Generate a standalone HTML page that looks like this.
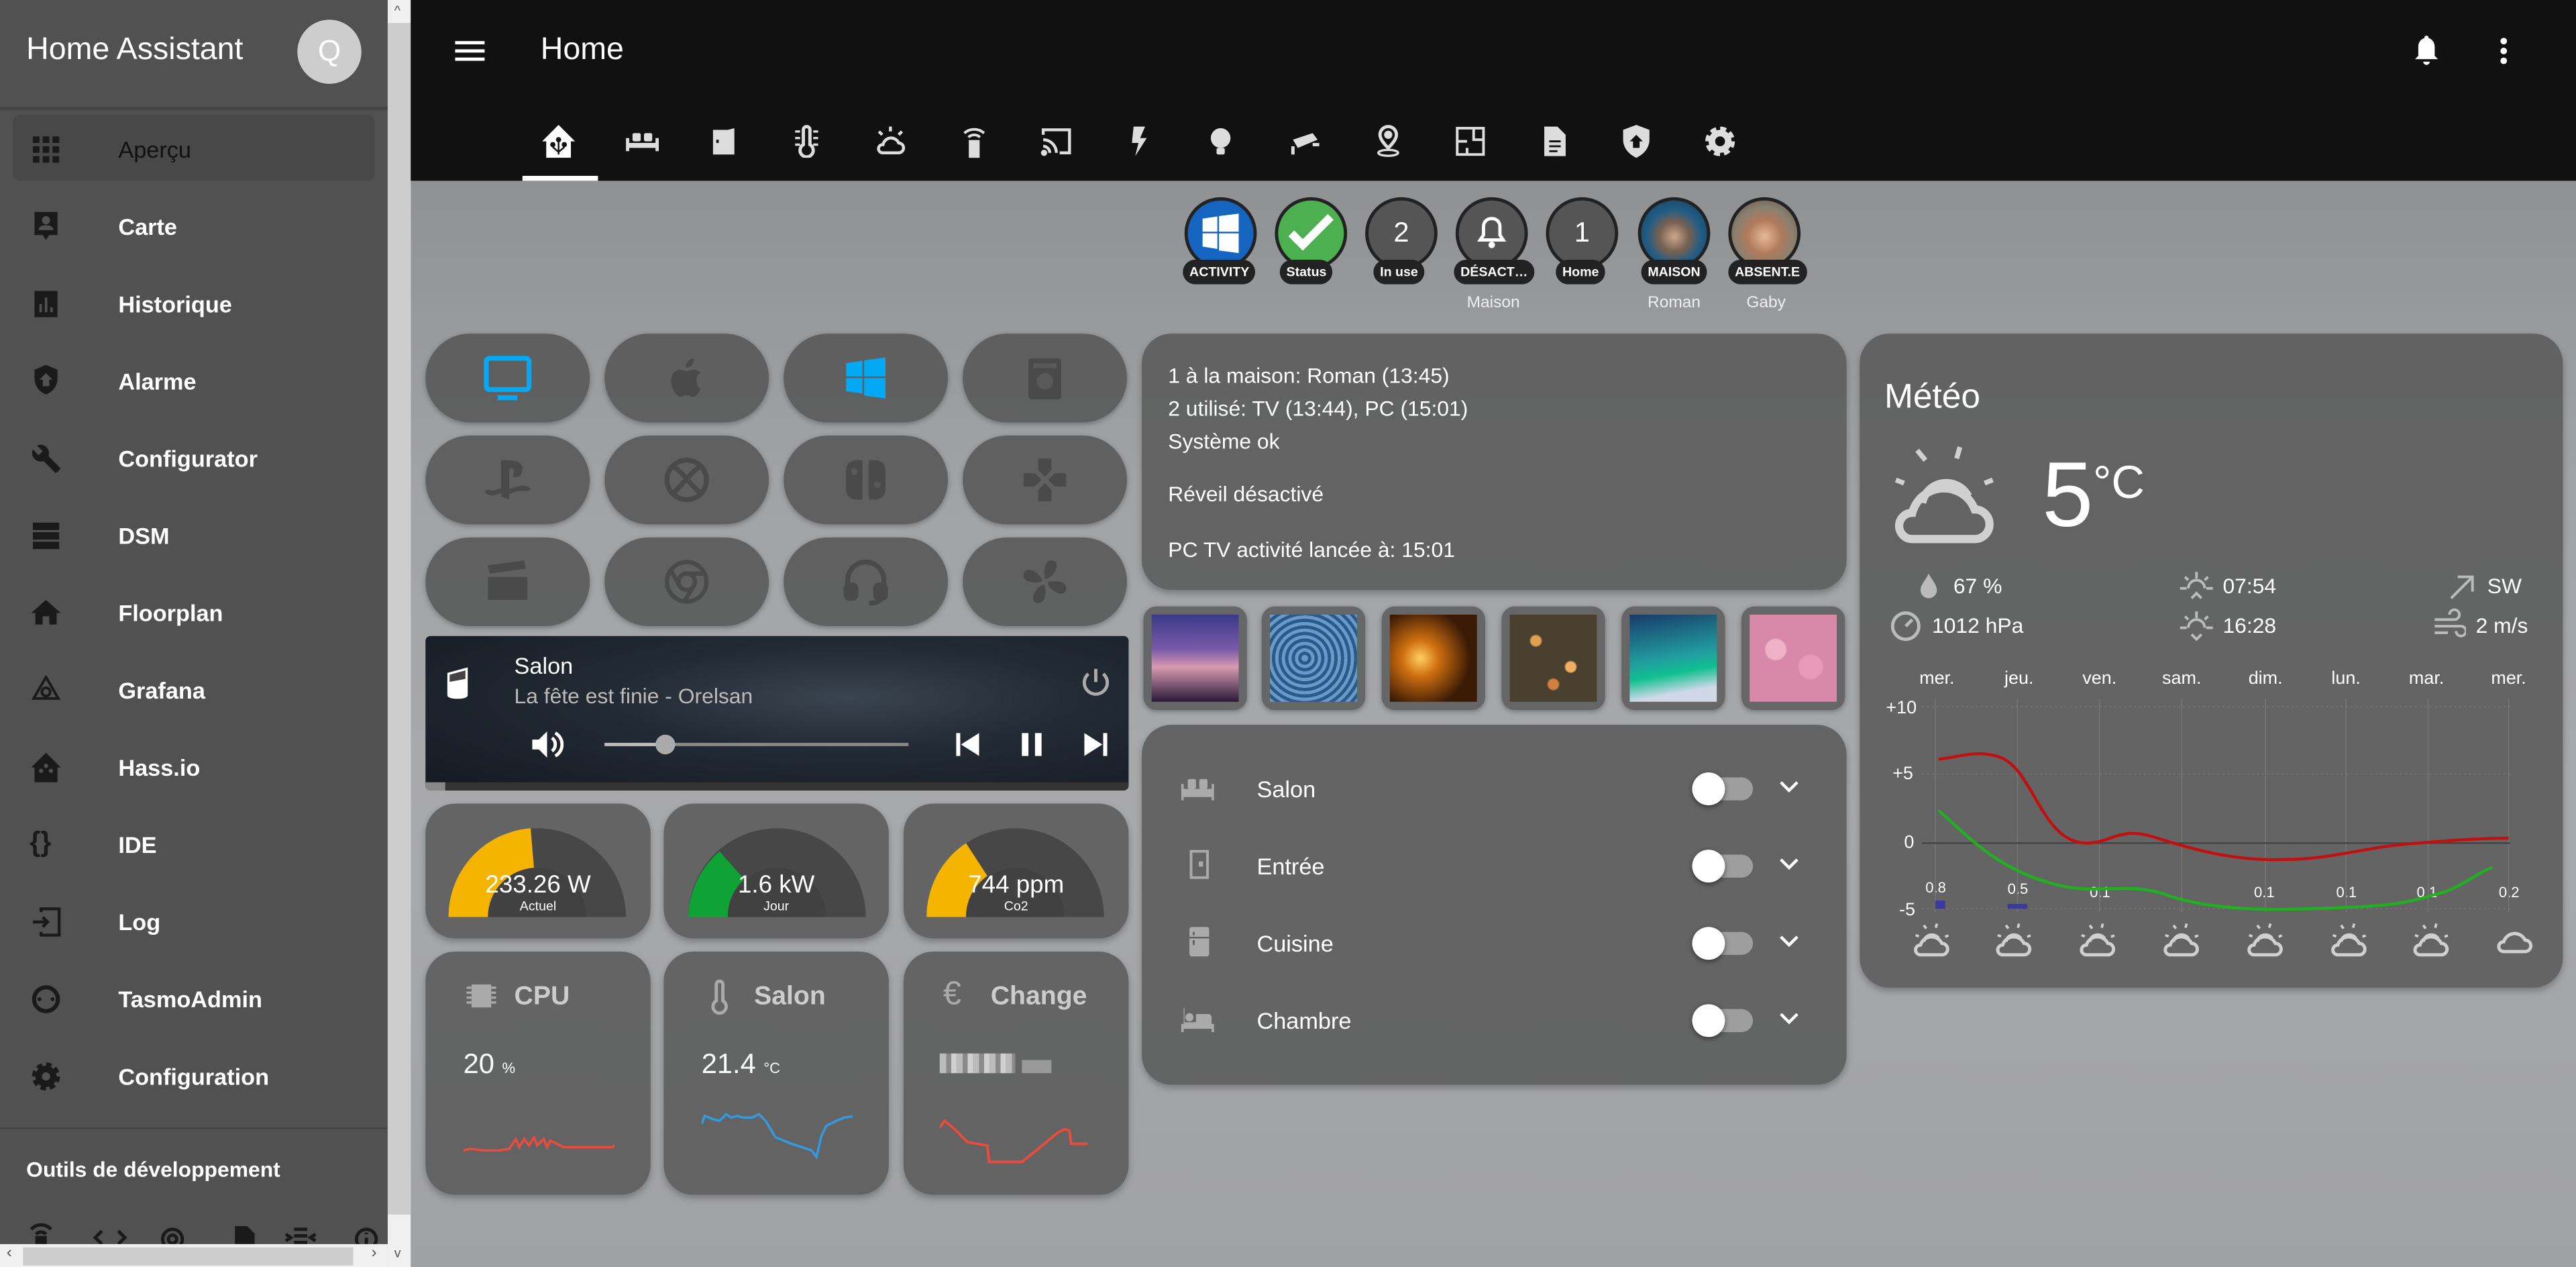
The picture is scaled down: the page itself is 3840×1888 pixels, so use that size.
<!DOCTYPE html>
<html><head><meta charset="utf-8">
<style>
html,body{margin:0;padding:0;width:3840px;height:1888px;overflow:hidden;background:#9c9d9f}
#w{position:absolute;left:0;top:0;width:1568px;height:771px;transform:scale(2.44898);transform-origin:0 0;font-family:"Liberation Sans",sans-serif;color:#fff;overflow:hidden;background:linear-gradient(180deg,#909193 110px,#a2a3a5 300px,#a8a9ab 500px,#a0a1a3 771px)}
.a{position:absolute}
#side{left:0;top:0;width:236px;height:771px;background:#515151}
.it{position:absolute;left:72px;font-size:14px;font-weight:bold;color:#fff}
.ic{position:absolute;left:19px;width:18px;height:18px}
.card{position:absolute;background:rgba(88,88,88,.85);border-radius:18px;box-shadow:0 2px 4px rgba(0,0,0,.25)}
.btn{position:absolute;width:100px;height:54px;border-radius:27px;background:rgba(85,85,85,.85);box-shadow:0 1px 3px rgba(0,0,0,.3)}
.btn svg{position:absolute;left:34px;top:11px}
.bd{position:absolute;top:120px;width:44px;height:44px;border-radius:50%;border:2px solid #222;background:#555;box-sizing:border-box;font-size:17px;text-align:center;line-height:40px}
.bl{position:absolute;top:158px;height:15px;border-radius:8px;background:#222;font-size:8px;line-height:15px;text-align:center;font-weight:bold;padding:0 4px}
.bn{position:absolute;top:179px;font-size:10px;color:#eee;text-align:center;width:60px}
.tab{position:absolute;top:76px;width:20px;height:20px}
.row{position:absolute;left:0;width:429px;height:40px;font-size:14px}
.tg{position:absolute;left:338px;top:13px;width:34px;height:14px;border-radius:7px;background:#9e9e9e}
.tg:before{content:"";position:absolute;left:-3px;top:-3px;width:20px;height:20px;border-radius:50%;background:#fff;box-shadow:0 1px 3px rgba(0,0,0,.5)}
.chev{position:absolute;left:388px;top:15px}
.img{position:absolute;top:369px;width:63px;height:63px;border-radius:8px;background:#666;box-shadow:0 1px 3px rgba(0,0,0,.3)}
.img div{position:absolute;left:5px;top:5px;width:53px;height:53px}
.wd{position:absolute;top:407px;font-size:11px;color:#fff;text-align:center;width:40px}
.wi{position:absolute;top:561px}
</style></head><body><div id="w">

<svg width="0" height="0" style="position:absolute"><defs>
<symbol id="pc" viewBox="0 0 24 22"><g fill="none" stroke="#d0d0d0" stroke-width="2"><path d="M5 20h13a3.5 3.5 0 000-7 7 7 0 00-13 1 3 3 0 000 6z"/><path d="M7 12a5 5 0 019-2"/><path d="M7 2l1.5 2M15 1l-.7 2.5M2 8l2 .8M20 9l2-.8" stroke-width="1.5"/></g></symbol>
</defs></svg>

<!-- sidebar -->
<div id="side" class="a">
 <div class="a" style="left:16px;top:20px;font-size:19px">Home Assistant</div>
 <div class="a" style="left:181px;top:12px;width:39px;height:39px;border-radius:50%;background:#cdcdcd;color:#fff;font-size:18px;text-align:center;line-height:39px">Q</div>
 <div class="a" style="left:0;top:65px;width:236px;height:2px;background:#444"></div>
 <div class="a" style="left:8px;top:70px;width:220px;height:40px;border-radius:4px;background:#484848"></div>
 <div class="it" style="top:83px;color:#111;font-weight:normal">Aperçu</div>
 <svg class="ic" style="top:82px" viewBox="0 0 18 18" fill="#1a1a1a"><rect x="1" y="1" width="4" height="4"/><rect x="7" y="1" width="4" height="4"/><rect x="13" y="1" width="4" height="4"/><rect x="1" y="7" width="4" height="4"/><rect x="7" y="7" width="4" height="4"/><rect x="13" y="7" width="4" height="4"/><rect x="1" y="13" width="4" height="4"/><rect x="7" y="13" width="4" height="4"/><rect x="13" y="13" width="4" height="4"/></svg>
 <div class="it" style="top:130px">Carte</div>
 <svg class="ic" style="top:128px" viewBox="0 0 18 18" fill="#1a1a1a"><path d="M2 1h14v14h-5l-2 3-2-3H2z"/><circle cx="9" cy="6" r="2.5" fill="#515151"/><path d="M4.5 12c0-2 2-3 4.5-3s4.5 1 4.5 3z" fill="#515151"/></svg>
 <div class="it" style="top:177px">Historique</div>
 <svg class="ic" style="top:176px" viewBox="0 0 18 18" fill="#1a1a1a"><path d="M2 1h14v16H2z"/><rect x="5" y="9" width="1.5" height="5" fill="#515151"/><rect x="8.3" y="5" width="1.5" height="9" fill="#515151"/><rect x="11.6" y="11" width="1.5" height="3" fill="#515151"/></svg>
 <div class="it" style="top:224px">Alarme</div>
 <svg class="ic" style="top:222px" viewBox="0 0 18 18" fill="#1a1a1a"><path d="M9 0L2 3v5c0 5 3 8.5 7 10 4-1.5 7-5 7-10V3z"/><path d="M9 5l-4 4h2v4h4V9h2z" fill="#515151"/></svg>
 <div class="it" style="top:271px">Configurator</div>
 <svg class="ic" style="top:270px" viewBox="0 0 18 18" fill="#1a1a1a"><path d="M16.5 14.5l-7-7c.7-1.8.3-3.9-1.2-5.4C6.7.5 4.4.2 2.5 1.1L6 4.5 3.5 7 0 3.5C-.9 5.4-.5 7.7 1.1 9.3c1.5 1.5 3.6 1.9 5.4 1.2l7 7c.3.3.8.3 1.1 0l1.9-1.9c.3-.3.3-.8 0-1.1z" transform="translate(1 0)"/></svg>
 <div class="it" style="top:318px">DSM</div>
 <svg class="ic" style="top:317px" viewBox="0 0 18 18" fill="#1a1a1a"><rect x="1" y="1" width="16" height="4.5"/><rect x="1" y="6.8" width="16" height="4.5"/><rect x="1" y="12.6" width="16" height="4.5"/></svg>
 <div class="it" style="top:365px">Floorplan</div>
 <svg class="ic" style="top:364px" viewBox="0 0 18 18" fill="#1a1a1a"><path d="M7 16v-5h4v5h4.5V9H18L9 1 0 9h2.5v7z"/></svg>
 <div class="it" style="top:412px">Grafana</div>
 <svg class="ic" style="top:411px" viewBox="0 0 18 18" fill="none" stroke="#1a1a1a" stroke-width="1.6"><path d="M9 1l7.5 13h-15z"/><circle cx="9" cy="10" r="2.5"/></svg>
 <div class="it" style="top:459px">Hass.io</div>
 <svg class="ic" style="top:458px" viewBox="0 0 18 18" fill="#1a1a1a"><path d="M9 0L0 9h2v9h14V9h2z"/><circle cx="9" cy="8" r="1.3" fill="#515151"/><circle cx="6" cy="11" r="1.3" fill="#515151"/><circle cx="12" cy="11" r="1.3" fill="#515151"/></svg>
 <div class="it" style="top:506px">IDE</div>
 <div class="a" style="left:18px;top:503px;font-size:17px;color:#1a1a1a;font-weight:bold">{}</div>
 <div class="it" style="top:553px">Log</div>
 <svg class="ic" style="top:552px" viewBox="0 0 18 18" fill="none" stroke="#1a1a1a" stroke-width="1.8"><path d="M6 3V1h11v16H6v-2"/><path d="M1 9h9M7 6l3 3-3 3"/></svg>
 <div class="it" style="top:600px">TasmoAdmin</div>
 <svg class="ic" style="top:599px" viewBox="0 0 18 18"><circle cx="9" cy="9" r="8.5" fill="#1a1a1a"/><circle cx="9" cy="9" r="6" fill="#515151"/><circle cx="5" cy="9" r="1.2" fill="#1a1a1a"/><circle cx="13" cy="9" r="1.2" fill="#1a1a1a"/></svg>
 <div class="it" style="top:647px">Configuration</div>
 <svg class="ic" style="top:646px" viewBox="0 0 18 18"><circle cx="9" cy="9" r="6.5" fill="#1a1a1a" stroke="#1a1a1a" stroke-width="4" stroke-dasharray="3 2.1"/><circle cx="9" cy="9" r="2.5" fill="#515151"/></svg>
 <div class="a" style="left:0;top:686px;width:236px;height:1px;background:#444"></div>
 <div class="a" style="left:16px;top:704px;font-size:13px;font-weight:bold">Outils de développement</div>
 <svg class="a" style="left:16px;top:742px" width="220" height="16" fill="none" stroke="#1a1a1a" stroke-width="2">
  <path d="M3 6a8 8 0 0112 0M6 9a4 4 0 016 0"/><rect x="6.5" y="11" width="5" height="6" fill="#1a1a1a"/>
  <path d="M46 7l-4 4 4 4M56 7l4 4-4 4"/>
  <circle cx="89" cy="12" r="6"/><circle cx="89" cy="12" r="2.5"/>
  <path d="M128 5h6l4 4v8h-10z" fill="#1a1a1a"/>
  <path d="M163 6h8M163 10h8M163 14h8M158 9l3 2-3 2M176 9l-3 2 3 2"/>
  <circle cx="207" cy="12" r="6"/><path d="M207 11v4M207 8v1"/>
 </svg>
 <div class="a" style="left:0;top:757px;width:236px;height:14px;background:#f0f0f0"></div>
 <div class="a" style="left:14px;top:759px;width:201px;height:11px;background:#cdcdcd"></div>
 <div class="a" style="left:4px;top:757px;font-size:10px;color:#555">‹</div>
 <div class="a" style="left:226px;top:757px;font-size:10px;color:#555">›</div>
</div>
<div class="a" style="left:236px;top:0;width:14px;height:771px;background:#f0f0f0"></div>
<div class="a" style="left:236px;top:14px;width:14px;height:725px;background:#cdcdcd"></div>
<div class="a" style="left:240px;top:2px;font-size:8px;color:#555">^</div>
<div class="a" style="left:240px;top:758px;font-size:8px;color:#555">v</div>

<!-- header -->
<div class="a" style="left:250px;top:0;width:1318px;height:110px;background:#111"></div>
<svg class="a" style="left:277px;top:24px" width="18" height="14"><rect y="1" width="18" height="2" fill="#fff"/><rect y="6" width="18" height="2" fill="#fff"/><rect y="11" width="18" height="2" fill="#fff"/></svg>
<div class="a" style="left:329px;top:20px;font-size:19px">Home</div>
<svg class="a" style="left:1467px;top:21px" width="20" height="22" viewBox="0 0 20 22" fill="#fff"><path d="M10 2c-3 0-5 2.5-5 5.5V13l-2 2h14l-2-2V7.5C15 4.5 13 2 10 2z"/><circle cx="10" cy="2" r="1.3"/><path d="M8 16.5a2 2 0 004 0z"/></svg>
<svg class="a" style="left:1520px;top:22px" width="8" height="18" fill="#fff"><circle cx="4" cy="3" r="2"/><circle cx="4" cy="9" r="2"/><circle cx="4" cy="15" r="2"/></svg>
<!-- tabs -->
<svg class="tab" style="left:330px" viewBox="0 0 20 20" fill="#fff"><path d="M10 0L0 10h2.5v10h15V10H20z"/><circle cx="10" cy="9" r="1.6" fill="#111"/><circle cx="6.5" cy="12" r="1.6" fill="#111"/><circle cx="13.5" cy="12" r="1.6" fill="#111"/><path d="M10 10v8M6.5 13.5l3.5 3M13.5 13.5L10 16.5" stroke="#111" stroke-width="1"/></svg>
<div class="a" style="left:318px;top:107px;width:46px;height:3px;background:#fff"></div>
<svg class="tab" style="left:381px" viewBox="0 0 20 20" fill="#ddd"><path d="M0 8h2v3h16V8h2v8h-2v-2H2v2H0z"/><rect x="4" y="5" width="5" height="5" rx="1"/><rect x="11" y="5" width="5" height="5" rx="1"/></svg>
<svg class="tab" style="left:431px" viewBox="0 0 20 20" fill="#ddd"><path d="M3 3h9l4-1v16H3z"/><rect x="5" y="9" width="1.5" height="2" fill="#111"/></svg>
<svg class="tab" style="left:481px" viewBox="0 0 20 20" fill="none" stroke="#ddd" stroke-width="2"><path d="M8 12V3a2 2 0 014 0v9a4 4 0 11-4 0z"/><path d="M3 4h3M3 8h3M3 12h3M14 4h3M14 8h3M14 12h3" stroke-width="1.4"/></svg>
<svg class="tab" style="left:532px" viewBox="0 0 20 20" fill="none" stroke="#ddd" stroke-width="1.8"><path d="M5 17h10a3 3 0 000-6 5 5 0 00-9.5 1A2.5 2.5 0 005 17z"/><path d="M10 1v3M3 4l2 2M17 4l-2 2" /></svg>
<svg class="tab" style="left:583px" viewBox="0 0 20 20" fill="none" stroke="#ddd" stroke-width="1.6"><path d="M4 5a9 9 0 0112 0M6.5 7.5a5 5 0 017 0"/><rect x="7.5" y="10" width="5" height="10" fill="#ddd"/></svg>
<svg class="tab" style="left:633px" viewBox="0 0 20 20" fill="none" stroke="#ddd" stroke-width="1.8"><path d="M2 6V3h16v14h-6"/><path d="M2 9a8 8 0 018 8M2 13a4 4 0 014 4"/><circle cx="2.5" cy="17" r="1" fill="#ddd"/></svg>
<svg class="tab" style="left:683px" viewBox="0 0 20 20" fill="#ddd"><path d="M7 1h7l-3 7h4L8 19l2-8H6z"/></svg>
<svg class="tab" style="left:733px" viewBox="0 0 20 20" fill="#ddd"><circle cx="10" cy="8" r="6"/><rect x="7.5" y="14" width="5" height="4" rx="1"/></svg>
<svg class="tab" style="left:785px" viewBox="0 0 20 20" fill="#ddd"><path d="M2 9l12-4 3 4-12 5z"/><path d="M3 13v5H1v-5z"/><rect x="14" y="11" width="4" height="2"/></svg>
<svg class="tab" style="left:835px" viewBox="0 0 20 20" fill="none" stroke="#ddd" stroke-width="2"><path d="M10 14s5-4.5 5-8a5 5 0 00-10 0c0 3.5 5 8 5 8z"/><circle cx="10" cy="6" r="1.5" fill="#ddd"/><ellipse cx="10" cy="17" rx="6" ry="1.8" stroke-width="1.4"/></svg>
<svg class="tab" style="left:885px" viewBox="0 0 20 20" fill="none" stroke="#ddd" stroke-width="1.6"><rect x="2" y="2" width="16" height="16"/><path d="M2 10h6M12 2v7h6M8 14v4"/></svg>
<svg class="tab" style="left:936px" viewBox="0 0 20 20" fill="#ddd"><path d="M4 1h8l5 5v13H4z"/><path d="M7 10h7M7 13h7M7 16h5" stroke="#111" stroke-width="1.2"/></svg>
<svg class="tab" style="left:986px" viewBox="0 0 20 20" fill="#ddd"><path d="M10 0L2 3v6c0 5 3.5 9 8 11 4.5-2 8-6 8-11V3z"/><path d="M10 6l-4 4h2v4h4v-4h2z" fill="#111"/></svg>
<svg class="tab" style="left:1037px" viewBox="0 0 20 20"><circle cx="10" cy="10" r="7" fill="#ddd" stroke="#ddd" stroke-width="4" stroke-dasharray="3.3 2.2"/><circle cx="10" cy="10" r="3" fill="#111"/></svg>

<!-- badges -->
<div class="bd" style="left:721px;background:#1565c0"><svg width="26" height="26" viewBox="0 0 26 26" style="margin-top:7px"><path d="M2 4l9-1.3V12H2zM12 2.5L24 1v11H12zM2 13h9v9.5L2 21zM12 13h12v12l-12-1.6z" fill="#fff"/></svg></div>
<div class="bl" style="left:720px">ACTIVITY</div>
<div class="bd" style="left:776px;background:#4caf50"><svg width="30" height="26" viewBox="0 0 30 26" style="margin-top:7px"><path d="M3 13l7 7L27 3" stroke="#fff" stroke-width="5" fill="none"/></svg></div>
<div class="bl" style="left:779px">Status</div>
<div class="bd" style="left:831px">2</div>
<div class="bl" style="left:836px">In use</div>
<div class="bd" style="left:886px"><svg width="18" height="22" viewBox="0 0 18 22" style="margin-top:8px" fill="none" stroke="#fff" stroke-width="2"><path d="M9 3c-3 0-5 2-5 5v5l-2 3h14l-2-3V8c0-3-2-5-5-5z"/><circle cx="9" cy="19" r="1" fill="#fff"/></svg></div>
<div class="bl" style="left:885px">DÉSACT…</div>
<div class="bn" style="left:879px">Maison</div>
<div class="bd" style="left:941px">1</div>
<div class="bl" style="left:947px">Home</div>
<div class="bd" style="left:997px;background:radial-gradient(circle at 50% 55%,#c9a98f 0,#7a6150 30%,#235d84 55%,#0e3b5a 100%)"></div>
<div class="bl" style="left:999px">MAISON</div>
<div class="bn" style="left:989px">Roman</div>
<div class="bd" style="left:1052px;background:radial-gradient(circle at 50% 55%,#e6b99a 0,#b07a5b 35%,#8a8070 60%,#5a4a40 100%)"></div>
<div class="bl" style="left:1052px">ABSENT.E</div>
<div class="bn" style="left:1045px">Gaby</div>

<!-- buttons -->
<div class="btn" style="left:259px;top:203px"><svg width="32" height="32" viewBox="0 0 32 32" fill="none" stroke="#03a9f4" stroke-width="3"><rect x="3" y="4" width="26" height="19" rx="2"/><path d="M10 28h12" /></svg></div>
<div class="btn" style="left:368px;top:203px"><svg width="32" height="32" viewBox="0 0 32 32" fill="#4a4a4a"><path d="M22 17c0-3 2.5-4 2.5-4-1.5-2-3.5-2-4.5-2-1.8 0-3 1-4 1s-2.5-1-4-1c-3 0-5.5 2.5-5.5 6.5 0 5 3.5 10 5.5 10 1.3 0 2-1 4-1s2.5 1 4 1c2 0 4-3.5 4.5-5-2-1-2.5-3-2.5-5.5zM19 8c1-1 1.5-2.5 1.3-4-1.3 0-2.8 1-3.6 2-.8 1-1.4 2.4-1.2 3.7 1.4.1 2.7-.7 3.5-1.7z"/></svg></div>
<div class="btn" style="left:477px;top:203px"><svg width="32" height="32" viewBox="0 0 32 32" fill="#03a9f4"><path d="M4 7l10-1.5V15H4zM15 5.3L28 3.5V15H15zM4 16h10v9.5L4 24zM15 16h13v12.5l-13-1.8z"/></svg></div>
<div class="btn" style="left:586px;top:203px"><svg width="32" height="32" viewBox="0 0 32 32" fill="#4a4a4a"><rect x="6" y="4" width="20" height="25" rx="2"/><circle cx="16" cy="18" r="5" fill="#595959"/><rect x="9" y="7" width="14" height="3" fill="#595959"/></svg></div>
<div class="btn" style="left:259px;top:265px"><svg width="32" height="32" viewBox="0 0 32 32" fill="#4a4a4a"><path d="M12 4v22l5 2V10c0-1 1-1.5 2-1s1 2.5 0 5c4 1 6-1 6-5s-4-5-13-5zM3 22c-2 1.5 0 3 4 3.5l5-1.5v-3l-5 1.5zM30 22c0-2-4-3-8-2l-5 1.5v3l5-1.7c3 0 6 .2 8-.8z"/></svg></div>
<div class="btn" style="left:368px;top:265px"><svg width="32" height="32" viewBox="0 0 32 32" fill="none" stroke="#4a4a4a" stroke-width="3"><circle cx="16" cy="16" r="12"/><path d="M8 8c5 3 8 8 16 16M24 8C19 11 16 16 8 24"/></svg></div>
<div class="btn" style="left:477px;top:265px"><svg width="32" height="32" viewBox="0 0 32 32" fill="#4a4a4a"><path d="M14 4h-4a6 6 0 00-6 6v12a6 6 0 006 6h4z"/><path d="M18 4h4a6 6 0 016 6v12a6 6 0 01-6 6h-4z"/><rect x="17" y="6" width="1" height="20" fill="#595959"/><circle cx="9" cy="11" r="2" fill="#595959"/><circle cx="23" cy="19" r="2" fill="#595959"/></svg></div>
<div class="btn" style="left:586px;top:265px"><svg width="32" height="32" viewBox="0 0 32 32" fill="#4a4a4a"><path d="M12 3h8v7l-4 4-4-4zM12 29h8v-7l-4-4-4 4zM3 12v8h7l4-4-4-4zM29 12v8h-7l-4-4 4-4z"/></svg></div>
<div class="btn" style="left:259px;top:327px"><svg width="32" height="32" viewBox="0 0 32 32" fill="#4a4a4a"><path d="M4 13h24v14H4zM4 6l22-3 1 5-22 3z"/></svg></div>
<div class="btn" style="left:368px;top:327px"><svg width="32" height="32" viewBox="0 0 32 32" fill="none" stroke="#4a4a4a" stroke-width="2.6"><circle cx="16" cy="16" r="12"/><circle cx="16" cy="16" r="5"/><path d="M16 11h11M11.7 18.5L6 8.5M20.3 18.5L14.5 28"/></svg></div>
<div class="btn" style="left:477px;top:327px"><svg width="32" height="32" viewBox="0 0 32 32" fill="none" stroke="#4a4a4a" stroke-width="3"><path d="M5 20v-5a11 11 0 0122 0v5"/><rect x="4" y="18" width="6" height="8" rx="2" fill="#4a4a4a"/><rect x="22" y="18" width="6" height="8" rx="2" fill="#4a4a4a"/><path d="M25 26c0 2-3 3-7 3"/></svg></div>
<div class="btn" style="left:586px;top:327px"><svg width="32" height="32" viewBox="0 0 32 32" fill="#4a4a4a"><path d="M16 14c-1-6 0-11 4-11 5 0 4 7-2 11zM18 16c6-1 11 0 11 4 0 5-7 4-11-2zM16 18c1 6 0 11-4 11-5 0-4-7 2-11zM14 16c-6 1-11 0-11-4 0-5 7-4 11 2z"/></svg></div>

<!-- media player -->
<div class="a" style="left:259px;top:387px;width:428px;height:94px;border-radius:3px;overflow:hidden;background:radial-gradient(ellipse at 60% 40%,#3a4450 0,#222a33 40%,#141a22 100%)">
 <div class="a" style="left:0;top:89px;width:428px;height:5px;background:#333"></div>
 <div class="a" style="left:0;top:89px;width:12px;height:5px;background:#888"></div>
</div>
<svg class="a" style="left:272px;top:405px" width="14" height="22" viewBox="0 0 14 22"><path d="M1 5l11-3v16c0 2-11 2-11 0z" fill="#fff"/><path d="M1 5l11-3v6L1 10z" fill="#444"/><path d="M1 5l11-3v16c0 2-11 2-11 0z" fill="none" stroke="#fff" stroke-width="1.4"/></svg>
<div class="a" style="left:313px;top:397px;font-size:14px">Salon</div>
<div class="a" style="left:313px;top:416px;font-size:13px;color:#bbb">La fête est finie - Orelsan</div>
<svg class="a" style="left:657px;top:405px" width="20" height="20" viewBox="0 0 20 20" fill="none" stroke="#aaa" stroke-width="2"><path d="M10 2v8M5.5 5a7 7 0 109 0"/></svg>
<svg class="a" style="left:323px;top:444px" width="20" height="18" viewBox="0 0 20 18" fill="#fff"><path d="M1 6h4l5-5v16l-5-5H1z"/><path d="M13 5a5 5 0 010 8M15 2a8 8 0 010 14" stroke="#fff" stroke-width="2" fill="none"/></svg>
<div class="a" style="left:368px;top:452px;width:185px;height:2px;background:#888"></div>
<div class="a" style="left:368px;top:452px;width:37px;height:2px;background:#bbb"></div>
<div class="a" style="left:399px;top:447px;width:12px;height:12px;border-radius:50%;background:#aaa"></div>
<svg class="a" style="left:582px;top:446px" width="14" height="14" fill="#fff"><rect x="0" y="0" width="2.5" height="14"/><path d="M14 0v14L3 7z"/></svg>
<svg class="a" style="left:621px;top:446px" width="14" height="14" fill="#fff"><rect x="1" y="0" width="4" height="14"/><rect x="9" y="0" width="4" height="14"/></svg>
<svg class="a" style="left:660px;top:446px" width="14" height="14" fill="#fff"><path d="M0 0v14l11-7z"/><rect x="11.5" y="0" width="2.5" height="14"/></svg>

<!-- gauges -->
<div class="card" style="left:259px;top:489px;width:137px;height:82px"></div>
<div class="card" style="left:404px;top:489px;width:137px;height:82px"></div>
<div class="card" style="left:550px;top:489px;width:137px;height:82px"></div>
<svg class="a" style="left:259px;top:489px" width="428" height="82">
 <g transform="translate(68,69)"><path d="M-54 0A54 54 0 0154 0H30A30 30 0 00-30 0z" fill="#474747"/><path d="M-54 0A54 54 0 01-4 -54L-2 -30A30 30 0 00-30 0z" fill="#f5b400"/></g>
 <g transform="translate(214,69)"><path d="M-54 0A54 54 0 0154 0H30A30 30 0 00-30 0z" fill="#474747"/><path d="M-54 0A54 54 0 01-35 -40L-20 -23A30 30 0 00-30 0z" fill="#0fa235"/></g>
 <g transform="translate(359,69)"><path d="M-54 0A54 54 0 0154 0H30A30 30 0 00-30 0z" fill="#474747"/><path d="M-54 0A54 54 0 01-30 -45L-17 -25A30 30 0 00-30 0z" fill="#f5b400"/></g>
 <path d="M38 69a30 30 0 0160 0z" fill="rgba(0,0,0,.35)"/>
 <path d="M184 69a30 30 0 0160 0z" fill="rgba(0,0,0,.35)"/>
 <path d="M329 69a30 30 0 0160 0z" fill="rgba(0,0,0,.35)"/>
</svg>
<div class="a" style="left:259px;top:530px;width:137px;text-align:center;font-size:15px">233.26 W</div>
<div class="a" style="left:259px;top:547px;width:137px;text-align:center;font-size:8px">Actuel</div>
<div class="a" style="left:404px;top:530px;width:137px;text-align:center;font-size:15px">1.6 kW</div>
<div class="a" style="left:404px;top:547px;width:137px;text-align:center;font-size:8px">Jour</div>
<div class="a" style="left:550px;top:530px;width:137px;text-align:center;font-size:15px">744 ppm</div>
<div class="a" style="left:550px;top:547px;width:137px;text-align:center;font-size:8px">Co2</div>

<!-- sensor cards -->
<div class="card" style="left:259px;top:579px;width:137px;height:148px"></div>
<div class="card" style="left:404px;top:579px;width:137px;height:148px"></div>
<div class="card" style="left:550px;top:579px;width:137px;height:148px"></div>
<svg class="a" style="left:284px;top:597px" width="18" height="18" fill="#aaa"><rect x="3" y="2" width="12" height="14"/><path d="M0 4h3M0 7h3M0 10h3M0 13h3M15 4h3M15 7h3M15 10h3M15 13h3" stroke="#aaa" stroke-width="1.4"/></svg>
<div class="a" style="left:313px;top:598px;font-size:16px;color:#ccc;font-weight:bold">CPU</div>
<div class="a" style="left:282px;top:638px;font-size:17px">20 <span style="font-size:9px">%</span></div>
<svg class="a" style="left:282px;top:680px" width="92" height="24"><path d="M0 20l4-1 8 1 10 0 6-1 4-6 2 5 3-5 3 4 3-5 2 5 4-4 2 5 2-4 4 2 4 2 20 0 10 0 4-4 2 3 2-3 4 3 4 1" fill="none" stroke="#e74c3c" stroke-width="1.5"/></svg>
<svg class="a" style="left:432px;top:596px" width="12" height="22" fill="none" stroke="#aaa" stroke-width="2"><path d="M4 13V3a2 2 0 014 0v10a4 4 0 11-4 0z"/></svg>
<div class="a" style="left:459px;top:598px;font-size:16px;color:#ccc;font-weight:bold">Salon</div>
<div class="a" style="left:427px;top:638px;font-size:17px">21.4 <span style="font-size:9px">°C</span></div>
<svg class="a" style="left:427px;top:674px" width="92" height="36"><path d="M0 10l2-5 5 2 4 1 4-4 3 2 4-1 3 1 6 0 4-2 4 4 3 5 3 5 5 2 5 2 6 2 6 2 3 4 3-13 3-6 6-3 5-2 7-1 3 0 4 1" fill="none" stroke="#3498db" stroke-width="1.5"/></svg>
<div class="a" style="left:574px;top:594px;font-size:20px;color:#aaa">€</div>
<div class="a" style="left:603px;top:598px;font-size:16px;color:#ccc;font-weight:bold">Change</div>
<div class="a" style="left:572px;top:641px;width:46px;height:12px;background:repeating-linear-gradient(90deg,#bbb 0 4px,#8a8a8a 4px 7px,#d0d0d0 7px 10px)"></div>
<div class="a" style="left:622px;top:645px;width:18px;height:8px;background:#999"></div>
<svg class="a" style="left:572px;top:678px" width="92" height="34"><path d="M0 8l3-4 6 5 8 8 12 2 1 10 20 0 10-8 12-10 4-2 3 1 1 8 10 0" fill="none" stroke="#e74c3c" stroke-width="1.6"/></svg>

<!-- middle -->
<div class="card" style="left:695px;top:203px;width:429px;height:156px"></div>
<div class="a" style="left:711px;top:219px;font-size:13px;line-height:20px">1 à la maison: Roman (13:45)<br>2 utilisé: TV (13:44), PC (15:01)<br>Système ok</div>
<div class="a" style="left:711px;top:293px;font-size:13px">Réveil désactivé</div>
<div class="a" style="left:711px;top:327px;font-size:13px">PC TV activité lancée à: 15:01</div>
<div class="img" style="left:696px"><div style="background:linear-gradient(180deg,#3a3a8a 0,#7a5aa8 40%,#d89ab0 60%,#2a1a3a 100%)"></div></div>
<div class="img" style="left:768px"><div style="background:repeating-radial-gradient(circle at 40% 50%,#6a9ac8 0 2px,#2a5a8a 2px 4px)"></div></div>
<div class="img" style="left:841px"><div style="background:radial-gradient(circle at 35% 50%,#ffd060 0,#d07010 25%,#3a1a05 70%)"></div></div>
<div class="img" style="left:914px"><div style="background:radial-gradient(circle at 30% 30%,#e0a050 0 3px,transparent 4px),radial-gradient(circle at 70% 60%,#f0b060 0 3px,transparent 4px),radial-gradient(circle at 50% 80%,#d08040 0 3px,transparent 4px),#4a4030"></div></div>
<div class="img" style="left:987px"><div style="background:linear-gradient(170deg,#1a3a6a 0,#20a0a0 50%,#10c090 65%,#d0d8e8 85%)"></div></div>
<div class="img" style="left:1060px"><div style="background:radial-gradient(circle at 30% 40%,#f0b0c8 0 6px,transparent 7px),radial-gradient(circle at 70% 60%,#e898b8 0 7px,transparent 8px),#d888a8"></div></div>
<div class="card" style="left:695px;top:441px;width:429px;height:219px"></div>
<div class="a" style="left:695px;top:441px;width:429px;height:219px">
 <div class="row" style="top:19px"><svg class="a" style="left:24px;top:12px" width="20" height="16" fill="#aaa"><path d="M0 5h1.5v3h17V5H20v10h-1.5v-2h-17v2H0z"/><rect x="4" y="2" width="5" height="6" rx="1"/><rect x="11" y="2" width="5" height="6" rx="1"/></svg><div class="a" style="left:70px;top:12px">Salon</div><div class="tg"></div><svg class="chev" width="12" height="8"><path d="M1 1l5 5 5-5" stroke="#fff" stroke-width="1.8" fill="none"/></svg></div>
 <div class="row" style="top:66px"><svg class="a" style="left:29px;top:10px" width="12" height="18" fill="none" stroke="#aaa" stroke-width="1.6"><rect x="1" y="1" width="10" height="16"/><rect x="6.5" y="8" width="1" height="1.5" fill="#aaa"/></svg><div class="a" style="left:70px;top:12px">Entrée</div><div class="tg"></div><svg class="chev" width="12" height="8"><path d="M1 1l5 5 5-5" stroke="#fff" stroke-width="1.8" fill="none"/></svg></div>
 <div class="row" style="top:113px"><svg class="a" style="left:28px;top:10px" width="14" height="20" fill="#aaa"><rect x="1" y="0" width="12" height="18" rx="1.5"/><rect x="3" y="3" width="1.2" height="2" fill="#626262"/><rect x="3" y="8" width="1.2" height="3" fill="#626262"/><rect x="1" y="6" width="12" height="1" fill="#626262"/></svg><div class="a" style="left:70px;top:12px">Cuisine</div><div class="tg"></div><svg class="chev" width="12" height="8"><path d="M1 1l5 5 5-5" stroke="#fff" stroke-width="1.8" fill="none"/></svg></div>
 <div class="row" style="top:160px"><svg class="a" style="left:24px;top:12px" width="20" height="16" fill="#aaa"><path d="M0 0h1.5v10h17V6a2 2 0 00-2-2H9v5h-7V0zM0 10h20v5h-1.5v-2h-17v2H0z"/><circle cx="5" cy="6" r="2.5"/></svg><div class="a" style="left:70px;top:12px">Chambre</div><div class="tg"></div><svg class="chev" width="12" height="8"><path d="M1 1l5 5 5-5" stroke="#fff" stroke-width="1.8" fill="none"/></svg></div>
</div>

<!-- weather -->
<div class="card" style="left:1132px;top:203px;width:428px;height:398px"></div>
<div class="a" style="left:1147px;top:230px;font-size:21px">Météo</div>
<svg class="a" style="left:1150px;top:268px" width="68" height="66" viewBox="0 0 68 66" fill="none" stroke="#d0d0d0" stroke-width="5"><path d="M14 60h38a9 9 0 000-18 20 20 0 00-38 2 8 8 0 000 16z"/><path d="M20 38a15 15 0 0128-4" /><path d="M17 6l5 6M43 4l-2 7M4 24l5 2M58 26l5-2" stroke-width="3"/></svg>
<div class="a" style="left:1243px;top:268px;font-size:56px;line-height:66px">5</div>
<div class="a" style="left:1274px;top:278px;font-size:28px">°C</div>
<svg class="a" style="left:1167px;top:349px" width="14" height="16" fill="#bbb"><path d="M7 0C5 4 2 7 2 10a5 5 0 0010 0c0-3-3-6-5-10z"/></svg>
<div class="a" style="left:1189px;top:349px;font-size:13px">67 %</div>
<svg class="a" style="left:1150px;top:371px" width="20" height="20" fill="none" stroke="#bbb" stroke-width="2"><circle cx="10" cy="10" r="8"/><path d="M10 10l4-4"/></svg>
<div class="a" style="left:1176px;top:373px;font-size:13px">1012 hPa</div>
<svg class="a" style="left:1326px;top:346px" width="22" height="22" fill="none" stroke="#bbb" stroke-width="1.6"><path d="M6 12a5 5 0 0110 0M1 12h4M17 12h4M11 2v4M4 5l2 2M18 5l-2 2M8 18l3-3 3 3"/></svg>
<div class="a" style="left:1353px;top:349px;font-size:13px">07:54</div>
<svg class="a" style="left:1326px;top:370px" width="22" height="22" fill="none" stroke="#bbb" stroke-width="1.6"><path d="M6 12a5 5 0 0110 0M1 12h4M17 12h4M11 2v4M4 5l2 2M18 5l-2 2M8 16l3 3 3-3"/></svg>
<div class="a" style="left:1353px;top:373px;font-size:13px">16:28</div>
<svg class="a" style="left:1490px;top:348px" width="18" height="18" fill="none" stroke="#bbb" stroke-width="1.6"><path d="M2 16L15 3M6 3h9v9"/></svg>
<div class="a" style="left:1514px;top:349px;font-size:13px">SW</div>
<svg class="a" style="left:1481px;top:370px" width="20" height="20" fill="none" stroke="#bbb" stroke-width="1.6"><path d="M1 7h12a3 3 0 10-3-3M1 11h16a3 3 0 11-3 3M1 15h8"/></svg>
<div class="a" style="left:1507px;top:373px;font-size:13px">2 m/s</div>
<div class="wd" style="left:1159px">mer.</div><div class="wd" style="left:1209px">jeu.</div><div class="wd" style="left:1258px">ven.</div><div class="wd" style="left:1308px">sam.</div><div class="wd" style="left:1359px">dim.</div><div class="wd" style="left:1408px">lun.</div><div class="wd" style="left:1457px">mar.</div><div class="wd" style="left:1507px">mer.</div>
<svg class="a" style="left:1132px;top:420px" width="428" height="140">
 <g font-size="11" fill="#fff" font-family="Liberation Sans">
  <text x="16" y="14">+10</text><text x="20" y="54">+5</text><text x="27" y="96">0</text><text x="24" y="137">-5</text>
  <text x="40" y="123" font-size="9">0.8</text><text x="90" y="124" font-size="9">0.5</text><text x="140" y="126" font-size="9">0.1</text><text x="240" y="126" font-size="9">0.1</text><text x="290" y="126" font-size="9">0.1</text><text x="339" y="126" font-size="9">0.1</text><text x="389" y="126" font-size="9">0.2</text>
 </g>
 <g stroke="#777" stroke-width="0.6"><path d="M46 5v130M96 5v130M146 5v130M196 5v130M247 5v130M296 5v130M346 5v130M395 5v130"/><path d="M38 10h358M38 51h358M38 133h358" stroke-dasharray="1 2"/></g>
 <path d="M38 93h358" stroke="#444" stroke-width="1"/>
 <rect x="46" y="128" width="6" height="5" fill="#3a3aa0"/><rect x="90" y="130" width="12" height="3" fill="#3a3aa0"/>
 <path d="M48 42c15-2 25-6 38-1 20 8 25 52 52 52 15 0 20-10 40-4 25 8 50 15 80 14 30 0 50-8 82-10c25-2 40-3 55-3" fill="none" stroke="#c01010" stroke-width="1.8"/>
 <path d="M48 73c20 18 40 40 80 47 20 3 40-3 60 5 30 10 70 9 110 7 30-1 40-4 60-10c10-4 20-12 27-14" fill="none" stroke="#20b020" stroke-width="1.8"/>
</svg>
<svg class="wi" style="left:1164px" width="24" height="22"><use href="#pc"/></svg>
<svg class="wi" style="left:1214px" width="24" height="22"><use href="#pc"/></svg>
<svg class="wi" style="left:1265px" width="24" height="22"><use href="#pc"/></svg>
<svg class="wi" style="left:1316px" width="24" height="22"><use href="#pc"/></svg>
<svg class="wi" style="left:1367px" width="24" height="22"><use href="#pc"/></svg>
<svg class="wi" style="left:1418px" width="24" height="22"><use href="#pc"/></svg>
<svg class="wi" style="left:1468px" width="24" height="22"><use href="#pc"/></svg>
<svg class="wi" style="left:1519px;top:563px" width="24" height="18" viewBox="0 0 24 18"><path d="M5 16h13a3.5 3.5 0 000-7 7 7 0 00-13 1 3 3 0 000 6z" fill="none" stroke="#d0d0d0" stroke-width="2"/></svg>

</div></body></html>
